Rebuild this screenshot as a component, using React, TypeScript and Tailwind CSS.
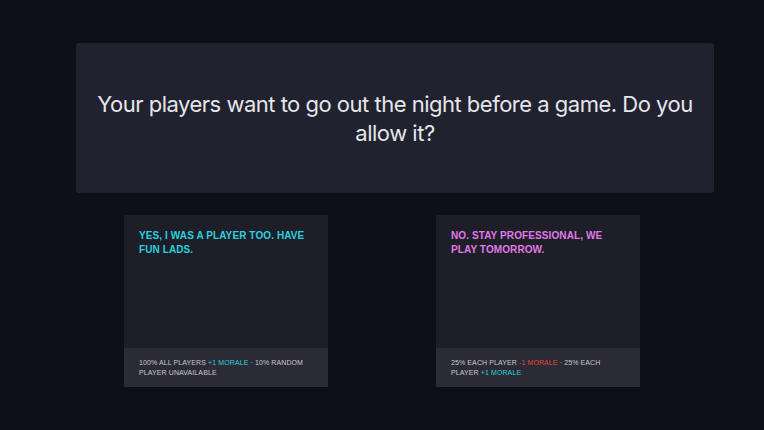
import React from 'react';

interface Choice {
  title: string;
  color: string;
  effect: React.ReactNode;
}

const choices: Choice[] = [
  {
    title: 'Yes, I was a player too. Have fun lads.',
    color: 'text-[#2ccfdf]',
    effect: (
      <>
        100% all players <span className="text-[#2ccfdf]">+1 morale</span> · 10% random player unavailable
      </>
    ),
  },
  {
    title: 'No. Stay professional, we play tomorrow.',
    color: 'text-[#e07ae8]',
    effect: (
      <>
        25% each player <span className="text-[#e0453f]">-1 morale</span> · 25% each player{' '}
        <span className="text-[#2ccfdf]">+1 morale</span>
      </>
    ),
  },
];

const App: React.FC = () => {
  return (
    <div className="w-[764px] h-[430px] bg-[#0e0f17] pt-[43px] overflow-hidden">
      {/* Question */}
      <div className="ml-[76px] w-[638px] h-[150px] bg-[#21222f] rounded-[3px] flex items-center justify-center px-4">
        <p className="text-center text-[22px] leading-[29px] text-[#e6e6ea] font-['Inter',sans-serif] tracking-[-0.5px] pt-[2px]">
          Your players want to go out the night before a game. Do you allow it?
        </p>
      </div>

      {/* Choices */}
      <div className="mt-[22px] ml-[124px] flex gap-[108px]">
        {choices.map((c, i) => (
          <div key={i} className="w-[204px] h-[172px] bg-[#1d1e27] flex flex-col">
            <div className="flex-1 px-[15px] pt-[14px]">
              <h3
                className={`${c.color} uppercase font-bold text-[10px] leading-[14px] tracking-[0.1px] font-['Liberation_Sans',sans-serif]`}
              >
                {c.title}
              </h3>
            </div>
            <div className="h-[39px] bg-[#2a2b35] px-[15px] pt-[10px]">
              <p className="uppercase text-[7px] leading-[10px] tracking-[0.1px] text-[#c9c9cf] font-['Liberation_Sans',sans-serif]">
                {c.effect}
              </p>
            </div>
          </div>
        ))}
      </div>
    </div>
  );
};

export default App;
